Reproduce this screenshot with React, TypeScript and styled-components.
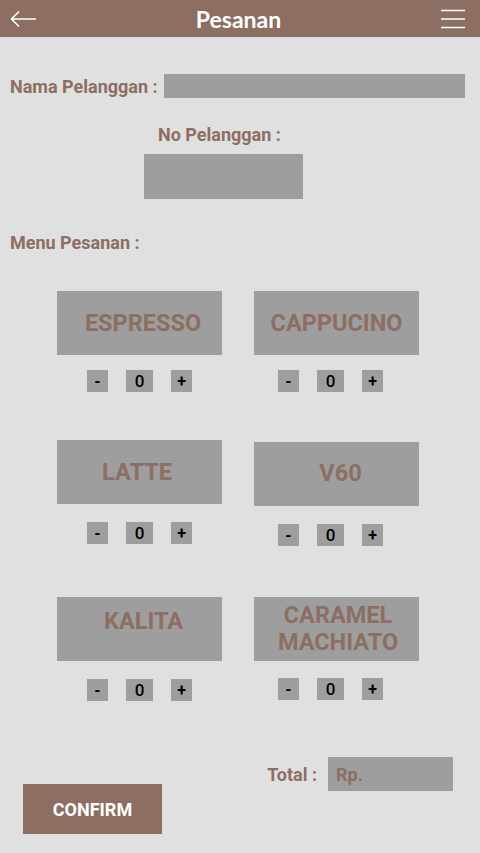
import styled, { createGlobalStyle } from "styled-components";

const GlobalStyle = createGlobalStyle`
    body {
        margin : 0;
        background : #e0e0e0;
        font-family : Roboto, "Liberation Sans", sans-serif;
    }
`

type Item = {
    name: string;
    lines?: string[];
    dy: number;
    gap: number;
    counterX: number;
    padLeft?: number;
    padBottom?: number;
};

const rows: { top: number; items: Item[] }[] = [
    {
        top: 0,
        items: [
            { name: "ESPRESSO", dy: 0, gap: 15, counterX: 30, padLeft: 7 },
            { name: "CAPPUCINO", dy: 0, gap: 15, counterX: 24 },
        ],
    },
    {
        top: 48,
        items: [
            { name: "LATTE", dy: 0, gap: 18, counterX: 30, padLeft: -5 },
            { name: "V60", dy: 2, gap: 18, counterX: 24, padLeft: 8, padBottom: 2 },
        ],
    },
    {
        top: 51,
        items: [
            { name: "KALITA", dy: 0, gap: 18, counterX: 30, padLeft: 8, padBottom: 16 },
            { name: "CARAMEL MACHIATO", lines: ["CARAMEL", "MACHIATO"], dy: 0, gap: 17, counterX: 24, padLeft: 3 },
        ],
    },
];

const App = () => {
    return <>
        <GlobalStyle />
        <Page>
            <Header>
                <IconBtn $w={26}>
                    <svg width="26" height="18" viewBox="0 0 26 18" fill="none" stroke="#fff" strokeWidth="1.6">
                        <path d="M26 9H1.5M9 1.5L1.5 9 9 16.5" />
                    </svg>
                </IconBtn>
                <Title>Pesanan</Title>
                <IconBtn $w={24}>
                    <svg width="24" height="20" viewBox="0 0 24 20" fill="none" stroke="#fff" strokeWidth="1.6">
                        <path d="M0 1.5h24M0 10h24M0 18.5h24" />
                    </svg>
                </IconBtn>
            </Header>

            <NameRow>
                <Label>Nama Pelanggan :</Label>
                <NameInput />
            </NameRow>

            <NoField>
                <Label>No Pelanggan :</Label>
                <NoInput />
            </NoField>

            <MenuLabel>Menu Pesanan :</MenuLabel>

            <MenuGrid>
                {rows.map((row, i) => (
                    <MenuRow key={i} $top={row.top}>
                        {row.items.map((item) => (
                            <MenuItem key={item.name} $dy={item.dy}>
                                <Card $padLeft={item.padLeft ?? 0} $padBottom={item.padBottom ?? 0}>
                                    {(item.lines ?? [item.name]).map((l) => <span key={l}>{l}</span>)}
                                </Card>
                                <Counter $gap={item.gap} $x={item.counterX}>
                                    <CountBtn>-</CountBtn>
                                    <CountValue>0</CountValue>
                                    <CountBtn>+</CountBtn>
                                </Counter>
                            </MenuItem>
                        ))}
                    </MenuRow>
                ))}
            </MenuGrid>

            <Footer>
                <ConfirmButton>CONFIRM</ConfirmButton>
                <TotalGroup>
                    <Label>Total :</Label>
                    <TotalBox>Rp.</TotalBox>
                </TotalGroup>
            </Footer>
        </Page>
    </>;
}

export default App;

const Page = styled.div`
    width : 480px;
    height : 853px;
    background : #e0e0e0;
    overflow : hidden;
`

const Header = styled.div`
    height : 37px;
    background : #8d6e63;
    display : flex;
    align-items : center;
    justify-content : space-between;
    padding : 0 15px 0 10px;
`

const IconBtn = styled.div<{ $w: number }>`
    display : flex;
    align-items : center;
    width : ${(p) => p.$w}px;
    height : 37px;
`

const Title = styled.h1`
    margin : 0;
    font-family : Lato, "Open Sans", sans-serif;
    font-weight : 700;
    font-size : 23px;
    color : #fff;
`

const Label = styled.span`
    font-size : 18px;
    line-height : 21px;
    font-weight : 700;
    color : #8d6e63;
    white-space : nowrap;
`

const NameRow = styled.div`
    display : flex;
    align-items : center;
    gap : 6px;
    margin : 37px 0 0 10px;
`

const NameInput = styled.div`
    width : 301px;
    height : 24px;
    background : #9e9e9e;
`

const NoField = styled.div`
    display : flex;
    flex-direction : column;
    align-items : flex-start;
    margin : 26px 0 0 144px;

    ${Label} {
        margin-left : 14px;
    }
`

const NoInput = styled.div`
    width : 159px;
    height : 45px;
    margin-top : 9px;
    background : #9e9e9e;
`

const MenuLabel = styled(Label)`
    display : block;
    margin : 33px 0 0 10px;
`

const MenuGrid = styled.div`
    margin : 38px 0 0 57px;
`

const MenuRow = styled.div<{ $top: number }>`
    display : grid;
    grid-template-columns : 165px 165px;
    column-gap : 32px;
    align-items : start;
    margin-top : ${(p) => p.$top}px;
`

const MenuItem = styled.div<{ $dy: number }>`
    display : flex;
    flex-direction : column;
    margin-top : ${(p) => p.$dy}px;
`

const Card = styled.div<{ $padLeft: number; $padBottom: number }>`
    height : 64px;
    box-sizing : border-box;
    background : #9e9e9e;
    display : flex;
    flex-direction : column;
    align-items : center;
    justify-content : center;
    padding-left : ${(p) => Math.max(p.$padLeft, 0)}px;
    padding-right : ${(p) => Math.max(-p.$padLeft, 0)}px;
    padding-bottom : ${(p) => p.$padBottom}px;
    font-size : 23.5px;
    line-height : 27px;
    font-weight : 700;
    color : #8d6e63;
`

const Counter = styled.div<{ $gap: number; $x: number }>`
    display : flex;
    gap : 18px;
    margin : ${(p) => p.$gap}px 0 0 ${(p) => p.$x}px;
`

const CountBtn = styled.div`
    width : 21px;
    height : 22px;
    background : #9e9e9e;
    display : flex;
    align-items : center;
    justify-content : center;
    font-size : 16px;
    font-weight : 700;
    color : #000;
`

const CountValue = styled(CountBtn)`
    width : 27px;
    font-size : 17px;
    font-weight : 500;
`

const Footer = styled.div`
    display : flex;
    justify-content : space-between;
    align-items : flex-start;
    padding : 0 27px 0 23px;
    margin-top : 56px;
`

const ConfirmButton = styled.button`
    width : 139px;
    height : 50px;
    margin-top : 27px;
    border : none;
    background : #8d6e63;
    color : #fff;
    font-family : Roboto, "Liberation Sans", sans-serif;
    font-size : 18px;
    font-weight : 700;
    padding : 0;
`

const TotalGroup = styled.div`
    display : flex;
    align-items : center;
    gap : 11px;
`

const TotalBox = styled.div`
    width : 117px;
    height : 34px;
    background : #9e9e9e;
    padding-left : 8px;
    display : flex;
    align-items : center;
    font-size : 18px;
    font-weight : 700;
    color : #8d6e63;
`
